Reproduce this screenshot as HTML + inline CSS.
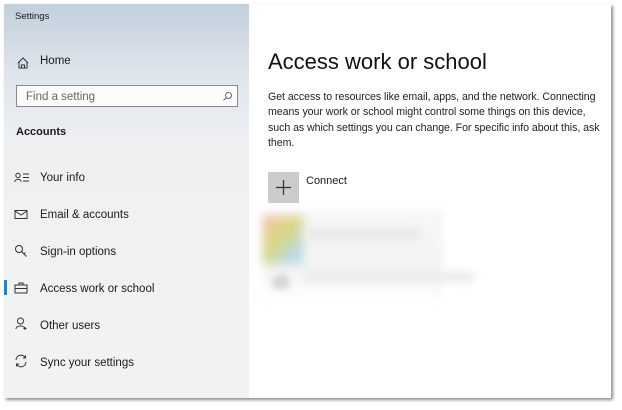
<!DOCTYPE html>
<html><head><style>
*{margin:0;padding:0;box-sizing:border-box}
body{width:622px;height:410px;background:#fff;font-family:"Liberation Sans",sans-serif;position:relative;overflow:hidden}
.win{position:absolute;left:4px;top:4px;width:607px;height:394px;background:#fff;box-shadow:2px 2px 3px rgba(0,0,0,.45)}
.side{position:absolute;left:0;top:0;width:245px;height:394px;background:linear-gradient(180deg,#c3cfdc 0%,#dfe5ec 18%,#eef0f2 35%,#f1f1f1 60%,#f2f2f2 100%)}
.t{position:absolute;font-size:11.5px;color:#1a1a1a;white-space:nowrap}
.ic{position:absolute}
</style></head><body>
<div class="win">
<div class="side">
<div class="t" style="left:11px;top:7px;font-size:9.5px">Settings</div>
<svg class="ic" style="left:12px;top:52px" width="14" height="14" viewBox="0 0 14 14" fill="none" stroke="#333" stroke-width="1"><path d="M2 7 L7 2 L12 7 M3 6 V12 H11 V6 M5.5 12 V9 H8.5 V12"/></svg>
<div class="t" style="left:36px;top:51px">Home</div>
<div style="position:absolute;left:12px;top:81px;width:222px;height:22px;background:#fbfbfb;border:1.5px solid #8a8a8a"></div>
<div class="t" style="left:22px;top:87px;color:#666">Find a setting</div>
<svg class="ic" style="left:218px;top:87px" width="11" height="11" viewBox="0 0 11 11" fill="none" stroke="#666"><circle cx="6.5" cy="4.5" r="3"/><path d="M4.3 6.7 L1.5 9.5"/></svg>
<div class="t" style="left:12px;top:122px;font-weight:bold;font-size:11px">Accounts</div>
<svg class="ic" style="left:10px;top:168px" width="16" height="11" viewBox="0 0 16 11" fill="none" stroke="#333"><circle cx="4" cy="3.5" r="2.2"/><path d="M0.8 10 C0.8 6.5 7.2 6.5 7.2 10 M9 2 H15 M9 5.5 H15 M9 9 H15"/></svg>
<div class="t" style="left:36px;top:168px">Your info</div>
<svg class="ic" style="left:10px;top:205px" width="14" height="11" viewBox="0 0 14 11" fill="none" stroke="#333"><rect x="1" y="1.5" width="12" height="8"/><path d="M1 2 L7 6 L13 2"/></svg>
<div class="t" style="left:36px;top:205px">Email &amp; accounts</div>
<svg class="ic" style="left:10px;top:240px" width="14" height="14" viewBox="0 0 14 14" fill="none" stroke="#333"><circle cx="5" cy="5" r="3.5"/><path d="M7.5 7.5 L12.5 12.5 M10 10 L11.5 8.5"/></svg>
<div class="t" style="left:36px;top:242px">Sign-in options</div>
<div style="position:absolute;left:0;top:276px;width:3px;height:15px;background:#1a86d0"></div>
<svg class="ic" style="left:10px;top:278px" width="14" height="12" viewBox="0 0 14 12" fill="none" stroke="#333"><rect x="1" y="3" width="12" height="8"/><path d="M5 3 V1 H9 V3 M1 6.5 H13"/></svg>
<div class="t" style="left:36px;top:279px">Access work or school</div>
<svg class="ic" style="left:11px;top:313px" width="13" height="14" viewBox="0 0 13 14" fill="none" stroke="#333"><circle cx="5.5" cy="4" r="3"/><path d="M1 12 C1 8 10 8 10 12 M10 10 V13 M8.5 11.5 H11.5"/></svg>
<div class="t" style="left:36px;top:316px">Other users</div>
<svg class="ic" style="left:10px;top:350px" width="14" height="14" viewBox="0 0 14 14" fill="none" stroke="#333"><path d="M2 6 A5 5 0 0 1 11.5 4 M12 8 A5 5 0 0 1 2.5 10 M11.5 1.5 V4 H9 M2.5 12.5 V10 H5"/></svg>
<div class="t" style="left:36px;top:353px">Sync your settings</div>
</div>
<div class="t" style="left:264px;top:45px;font-size:22px;color:#111">Access work or school</div>
<div style="position:absolute;left:264px;top:86px;width:340px;font-size:10.6px;line-height:15.3px;color:#222;letter-spacing:-0.05px">Get access to resources like email, apps, and the network. Connecting means your work or school might control some things on this device, such as which settings you can change. For specific info about this, ask them.</div>
<div style="position:absolute;left:264px;top:168px;width:31px;height:31px;background:#cccccc"></div>
<svg class="ic" style="left:271px;top:175px" width="17" height="17" viewBox="0 0 17 17" stroke="#333" stroke-width="1.2"><path d="M8.5 1 V16 M1 8.5 H16"/></svg>
<div class="t" style="left:302px;top:171px;font-size:11px">Connect</div>
<div style="position:absolute;left:259px;top:207px;width:180px;height:95px;background:linear-gradient(180deg,#f6f6f6,#f3f3f3 60%,#fff);filter:blur(4px)"></div>
<div style="position:absolute;left:259px;top:212px;width:40px;height:48px;background:linear-gradient(135deg,#f2c0a8 0%,#d8d880 45%,#b8d8e8 80%);filter:blur(5px)"></div>
<div style="position:absolute;left:305px;top:225px;width:110px;height:10px;background:#e6e6e6;filter:blur(4px)"></div>
<div style="position:absolute;left:268px;top:270px;width:18px;height:16px;background:#d8d8d8;border-radius:50%;filter:blur(3px)"></div>
<div style="position:absolute;left:300px;top:268px;width:170px;height:10px;background:#ebebeb;filter:blur(4px)"></div>
</div>
</body></html>
